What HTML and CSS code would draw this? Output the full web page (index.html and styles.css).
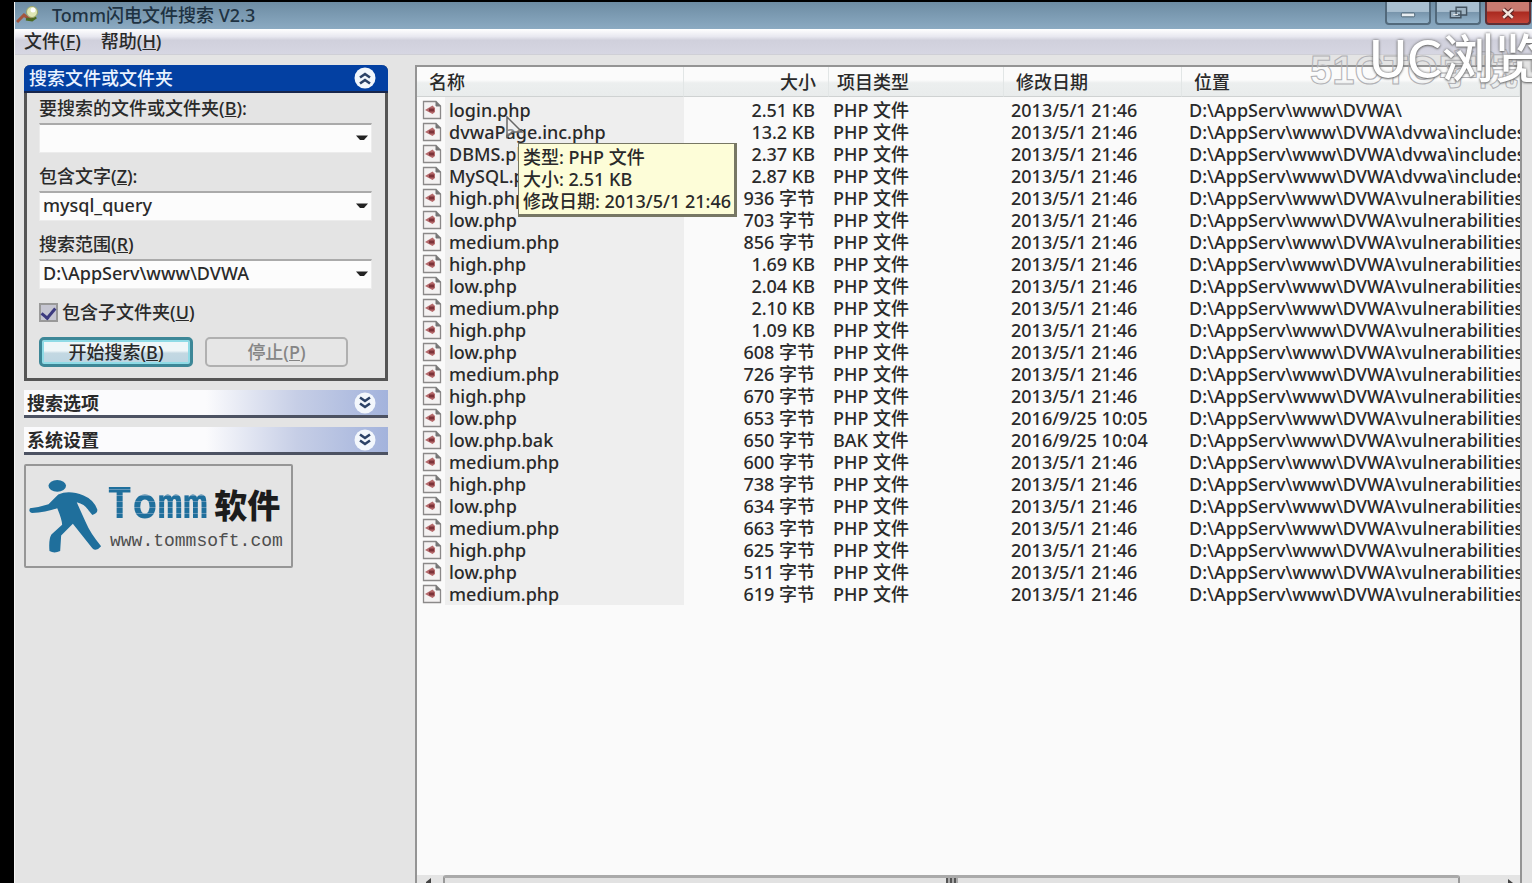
FILE: index.html
```html
<!DOCTYPE html>
<html lang="zh-CN">
<head>
<meta charset="utf-8">
<title>Tomm闪电文件搜索 V2.3</title>
<link rel="stylesheet" href="styles.css">
</head>
<body>
<svg class="defs" aria-hidden="true">
  <symbol id="file" viewBox="0 0 20 20">
    <path d="M1.5 1.5H14L18.500 6V18.500H1.500Z" fill="#f4f2f2" stroke="#8b8989" stroke-width="1.300"/>
    <path d="M14 1.500V6H18.500" fill="#777" stroke="#777"/>
    <path d="M3 10L10.500 5.500L13 8V12L10.500 14Z" fill="#b4686a"/>
    <path d="M7 8.500h5v3h-5z" fill="#7d3238"/>
  </symbol>
  <symbol id="down" viewBox="0 0 12 6"><path d="M0 0.500H12L8 5H4Z" fill="#222"/></symbol>
  <symbol id="chev" viewBox="0 0 22 22">
    <circle cx="11" cy="11" r="10.500" fill="#f3f7fc"/>
    <path d="M6 5.500L11 9L16 5.500M6 11.500L11 15L16 11.500" fill="none" stroke="#2c4266" stroke-width="2.600"/>
  </symbol>
</svg>
<div class="window">
  <header class="titlebar">
    <svg class="app-icon" viewBox="0 0 24 20" aria-hidden="true">
      <path d="M1 17L8 10L13 14L17 11" fill="none" stroke="#a4553c" stroke-width="3"/>
      <path d="M10 14L16 15L20 12" fill="none" stroke="#4c6a22" stroke-width="3"/>
      <circle cx="16" cy="7" r="5.500" fill="#dfe6b4" stroke="#9ba66a"/>
      <circle cx="17" cy="5" r="2.500" fill="#fff"/>
    </svg>
    <h1 class="title">Tomm闪电文件搜索 V2.3</h1>
    <div class="controls">
      <button class="ctl" type="button" aria-label="最小化"><svg viewBox="0 0 44 20"><rect x="15" y="10" width="14" height="4" rx="1" fill="#e8eef2" stroke="#4d6473"/></svg></button>
      <button class="ctl" type="button" aria-label="还原"><svg viewBox="0 0 44 20"><path d="M20 4h11v8h-11zM14 8h11v7h-11z" fill="#9fb4c3" stroke="#43525f" stroke-width="1.500"/><path d="M17 11h5v1h-5z" fill="#eee"/></svg></button>
      <button class="ctl close" type="button" aria-label="关闭"><svg viewBox="0 0 44 20"><path d="M17 6L27 15M27 6L17 15" stroke="#5d2525" stroke-width="5"/><path d="M17 6L27 15M27 6L17 15" stroke="#f3e4dc" stroke-width="2.600"/></svg></button>
    </div>
  </header>
  <nav class="menubar">
    <button type="button">文件(<u>F</u>)</button>
    <button type="button">帮助(<u>H</u>)</button>
  </nav>
  <main class="content">
    <aside class="sidebar">
      <section class="panel">
        <h2 class="panel-head"><span>搜索文件或文件夹</span>
          <button type="button" aria-label="折叠"><svg class="chev up"><use href="#chev"/></svg></button></h2>
        <form class="panel-body">
          <div class="field">
            <label for="name">要搜索的文件或文件夹(<u>B</u>):</label>
            <div class="combo"><select id="name"><option></option></select><svg><use href="#down"/></svg></div>
          </div>
          <div class="field">
            <label for="text">包含文字(<u>Z</u>):</label>
            <div class="combo"><select id="text"><option>mysql_query</option></select><svg><use href="#down"/></svg></div>
          </div>
          <div class="field">
            <label for="scope">搜索范围(<u>R</u>)</label>
            <div class="combo"><select id="scope"><option>D:\AppServ\www\DVWA</option></select><svg><use href="#down"/></svg></div>
          </div>
          <div class="check">
            <input id="sub" type="checkbox" checked>
            <label for="sub">包含子文件夹(<u>U</u>)</label>
          </div>
          <div class="actions">
            <button class="start" type="button">开始搜索(<u>B</u>)</button>
            <button class="stop" type="button" disabled>停止(<u>P</u>)</button>
          </div>
        </form>
      </section>
      <button class="section" type="button"><span>搜索选项</span><svg class="chev"><use href="#chev"/></svg></button>
      <button class="section" type="button"><span>系统设置</span><svg class="chev"><use href="#chev"/></svg></button>
      <div class="brand">
        <svg class="runner" viewBox="0 0 80 78" aria-hidden="true">
          <ellipse cx="30" cy="8" rx="9" ry="6" fill="#1f6f9c"/>
          <path d="M2 31Q0 35 4 36Q18 35 30 31Q35 43 35 48L24 58Q21 63 22 75Q27 78 33 75L34 59L46 47L66 72Q70 76 75 70Q64 57 59 45L50 25Q58 27 62 33L66 38Q72 36 71 32Q67 22 57 18Q42 12 31 17L21 27Q12 30 2 31Z" fill="#1f6f9c"/>
        </svg>
        <div class="brand-text">
          <div class="brand-name"><span class="latin">Tomm</span><span class="han">软件</span></div>
          <div class="site">www.tommsoft.com</div>
        </div>
      </div>
    </aside>
    <section class="list">
      <div class="scroller">
      <table>
        <colgroup><col class="c-name"><col class="c-size"><col class="c-type"><col class="c-date"><col></colgroup>
        <thead><tr><th>名称</th><th class="num">大小</th><th>项目类型</th><th>修改日期</th><th>位置</th></tr></thead>
        <tbody>
<tr><td><svg><use href="#file"/></svg>login.php</td><td>2.51 KB</td><td>PHP 文件</td><td>2013/5/1 21:46</td><td>D:\AppServ\www\DVWA\</td></tr>
<tr><td><svg><use href="#file"/></svg>dvwaPage.inc.php</td><td>13.2 KB</td><td>PHP 文件</td><td>2013/5/1 21:46</td><td>D:\AppServ\www\DVWA\dvwa\includes</td></tr>
<tr><td><svg><use href="#file"/></svg>DBMS.php</td><td>2.37 KB</td><td>PHP 文件</td><td>2013/5/1 21:46</td><td>D:\AppServ\www\DVWA\dvwa\includes</td></tr>
<tr><td><svg><use href="#file"/></svg>MySQL.php</td><td>2.87 KB</td><td>PHP 文件</td><td>2013/5/1 21:46</td><td>D:\AppServ\www\DVWA\dvwa\includes</td></tr>
<tr><td><svg><use href="#file"/></svg>high.php</td><td>936 字节</td><td>PHP 文件</td><td>2013/5/1 21:46</td><td>D:\AppServ\www\DVWA\vulnerabilities</td></tr>
<tr><td><svg><use href="#file"/></svg>low.php</td><td>703 字节</td><td>PHP 文件</td><td>2013/5/1 21:46</td><td>D:\AppServ\www\DVWA\vulnerabilities</td></tr>
<tr><td><svg><use href="#file"/></svg>medium.php</td><td>856 字节</td><td>PHP 文件</td><td>2013/5/1 21:46</td><td>D:\AppServ\www\DVWA\vulnerabilities</td></tr>
<tr><td><svg><use href="#file"/></svg>high.php</td><td>1.69 KB</td><td>PHP 文件</td><td>2013/5/1 21:46</td><td>D:\AppServ\www\DVWA\vulnerabilities</td></tr>
<tr><td><svg><use href="#file"/></svg>low.php</td><td>2.04 KB</td><td>PHP 文件</td><td>2013/5/1 21:46</td><td>D:\AppServ\www\DVWA\vulnerabilities</td></tr>
<tr><td><svg><use href="#file"/></svg>medium.php</td><td>2.10 KB</td><td>PHP 文件</td><td>2013/5/1 21:46</td><td>D:\AppServ\www\DVWA\vulnerabilities</td></tr>
<tr><td><svg><use href="#file"/></svg>high.php</td><td>1.09 KB</td><td>PHP 文件</td><td>2013/5/1 21:46</td><td>D:\AppServ\www\DVWA\vulnerabilities</td></tr>
<tr><td><svg><use href="#file"/></svg>low.php</td><td>608 字节</td><td>PHP 文件</td><td>2013/5/1 21:46</td><td>D:\AppServ\www\DVWA\vulnerabilities</td></tr>
<tr><td><svg><use href="#file"/></svg>medium.php</td><td>726 字节</td><td>PHP 文件</td><td>2013/5/1 21:46</td><td>D:\AppServ\www\DVWA\vulnerabilities</td></tr>
<tr><td><svg><use href="#file"/></svg>high.php</td><td>670 字节</td><td>PHP 文件</td><td>2013/5/1 21:46</td><td>D:\AppServ\www\DVWA\vulnerabilities</td></tr>
<tr><td><svg><use href="#file"/></svg>low.php</td><td>653 字节</td><td>PHP 文件</td><td>2016/9/25 10:05</td><td>D:\AppServ\www\DVWA\vulnerabilities</td></tr>
<tr><td><svg><use href="#file"/></svg>low.php.bak</td><td>650 字节</td><td>BAK 文件</td><td>2016/9/25 10:04</td><td>D:\AppServ\www\DVWA\vulnerabilities</td></tr>
<tr><td><svg><use href="#file"/></svg>medium.php</td><td>600 字节</td><td>PHP 文件</td><td>2013/5/1 21:46</td><td>D:\AppServ\www\DVWA\vulnerabilities</td></tr>
<tr><td><svg><use href="#file"/></svg>high.php</td><td>738 字节</td><td>PHP 文件</td><td>2013/5/1 21:46</td><td>D:\AppServ\www\DVWA\vulnerabilities</td></tr>
<tr><td><svg><use href="#file"/></svg>low.php</td><td>634 字节</td><td>PHP 文件</td><td>2013/5/1 21:46</td><td>D:\AppServ\www\DVWA\vulnerabilities</td></tr>
<tr><td><svg><use href="#file"/></svg>medium.php</td><td>663 字节</td><td>PHP 文件</td><td>2013/5/1 21:46</td><td>D:\AppServ\www\DVWA\vulnerabilities</td></tr>
<tr><td><svg><use href="#file"/></svg>high.php</td><td>625 字节</td><td>PHP 文件</td><td>2013/5/1 21:46</td><td>D:\AppServ\www\DVWA\vulnerabilities</td></tr>
<tr><td><svg><use href="#file"/></svg>low.php</td><td>511 字节</td><td>PHP 文件</td><td>2013/5/1 21:46</td><td>D:\AppServ\www\DVWA\vulnerabilities</td></tr>
<tr><td><svg><use href="#file"/></svg>medium.php</td><td>619 字节</td><td>PHP 文件</td><td>2013/5/1 21:46</td><td>D:\AppServ\www\DVWA\vulnerabilities</td></tr>
        </tbody>
      </table>
      </div>
      <div class="hscroll" aria-hidden="true">
        <svg viewBox="0 0 26 8"><path d="M9 7L14 3V8H9Z" fill="#444"/></svg>
        <div class="thumb"><span class="grip"></span></div>
        <svg class="wide" viewBox="0 0 60 8"><path d="M48 8V4L53 8Z" fill="#444"/></svg>
      </div>
      <svg class="cursor" viewBox="0 0 22 26" aria-hidden="true"><path d="M2 1V21L7 16L17 16Z" fill="#f4f4f4" fill-opacity=".5" stroke="#686868" stroke-width="1.500"/></svg>
      <div class="tooltip" role="tooltip">类型: PHP 文件<br>大小: 2.51 KB<br>修改日期: 2013/5/1 21:46</div>
    </section>
  </main>
</div>
<div class="mark outline">51CTO学院</div>
<div class="mark uc">UC浏览器</div>
</body>
</html>
```
FILE: styles.css
```css
* { box-sizing: border-box; }
body {
  margin: 0;
  height: 100vh;
  overflow: hidden;
  position: relative;
  background: #000;
  padding: 2px 0 0 14px;
  color: #2a2a2a;
  font: 500 18px/22px "Noto Sans", "Noto Sans CJK SC", sans-serif;
}
button, select, input { font: inherit; color: inherit; margin: 0; }
button { border: 0; background: none; padding: 0; text-align: left; }
.defs { position: absolute; width: 0; height: 0; }
.window { height: 100%; display: flex; flex-direction: column; background: #e4e4e4; border-left: 1px solid #f6f6f6; overflow: hidden; }

.titlebar { display: flex; align-items: center; height: 27px; flex: none; padding: 0 1px 2px; background: linear-gradient(#6d8ca3, #8baac2); }
.app-icon { width: 24px; height: 20px; }
.title { margin: 0 0 0 12px; font-size: 18px; font-weight: 500; color: #1e3242; flex: 1; }
.controls { display: flex; gap: 4px; align-self: flex-start; }
.ctl { width: 46px; height: 23px; border: 2px solid #52697b; border-top: 0; border-radius: 0 0 4px 4px; background: linear-gradient(#a9bfd0 45%, #7895ac 50%, #94b3ca); }
.ctl svg { display: block; width: 100%; height: 20px; }
.close { background: linear-gradient(#c87a70 40%, #ab2a20 50%, #c4453a); border-color: #5e3036; }

.menubar { display: flex; gap: 20px; flex: none; height: 26px; padding: 0 9px 2px; background: linear-gradient(#fff, #e8e8f0 30%, #d0d0dc 45%, #d6d6e2); border-bottom: 1px solid #cfcfd6; }

.content { flex: 1; min-height: 0; display: flex; gap: 27px; padding: 10px 10px 0 9px; }
.sidebar { width: 364px; flex: none; display: flex; flex-direction: column; gap: 9px; }
.panel { border: 3px solid #555; border-top: 0; border-radius: 6px 6px 0 0; background: #e4e4e4; }
.panel-head { display: flex; align-items: center; justify-content: space-between; height: 28px; margin: 0 -3px; padding: 0 12px 0 5px; border-radius: 6px 6px 0 0; background: #0340a2; border-bottom: 2px solid #17264c; color: #eaf2ff; font-size: 18px; font-weight: 500; }
.chev { display: block; width: 22px; height: 22px; }
.up { transform: rotate(180deg); }
.panel-body { margin: 0; padding: 0 13px 11px 12px; }
.field { margin-bottom: 8px; }
.field label { display: block; line-height: 30px; }
.combo { display: grid; align-items: center; }
.combo select { grid-area: 1 / 1; width: 100%; height: 30px; appearance: none; border: 1px solid #ececec; border-top: 2px solid #aaa; border-radius: 0; background: #fcfcfc; padding: 0 3px 3px; }
.combo svg { grid-area: 1 / 1; justify-self: end; width: 12px; height: 6px; margin-right: 4px; pointer-events: none; }
.check { display: flex; align-items: center; gap: 4px; margin-top: 12px; }
.check input { appearance: none; width: 19px; height: 19px; border: 2px solid #999; background: #c6c6d2; display: grid; place-items: center; }
.check input:checked::before { content: ""; width: 6px; height: 11px; border: solid #3c3a80; border-width: 0 3px 3px 0; transform: rotate(40deg); }
.actions { display: flex; gap: 12px; margin-top: 14px; }
.actions button { height: 30px; border-radius: 5px; text-align: center; }
.start { width: 154px; border: 3px solid #3d8797; background: linear-gradient(#eef6f8 45%, #c3d8e2 55%, #bcd5e2); box-shadow: inset 0 0 0 2px #8fdbe6; }
.stop { width: 143px; border: 2px solid #b0b0b0; background: #e6e6e6; color: #858585; }
.section { display: flex; align-items: center; justify-content: space-between; height: 28px; padding: 0 12px 0 3px; border-bottom: 3px solid #4c5262; background: linear-gradient(90deg, #fbfbfd 50%, #c6cee6 75%, #a3b3dc); font-weight: 700; }

.brand { display: flex; align-items: center; width: 269px; height: 104px; padding-left: 2px; border: 2px solid #969696; border-radius: 2px; gap: 4px; }
.runner { width: 78px; height: 76px; flex: none; }
.brand-text { flex: 1; padding-top: 10px; }
.brand-name { display: flex; align-items: center; gap: 6px; height: 40px; }
.latin { font: 700 42px/40px "DejaVu Sans Mono", monospace; color: transparent; background: repeating-linear-gradient(#1f6f9c 0 5px, #6496b8 5px 6px); background-clip: text; margin-left: -3px; }
.han { font: 900 33px/40px "Noto Sans CJK SC", sans-serif; color: #1c1c1c; }
.site { font: 18px/34px "Liberation Mono", monospace; color: #4e4e4e; }

.list { position: relative; flex: 1; min-width: 0; display: flex; flex-direction: column; background: #fafafa; border: 2px solid #949494; border-bottom: 0; }
.scroller { flex: 1; min-height: 0; overflow: hidden; }
table { width: 100%; table-layout: fixed; border-collapse: separate; border-spacing: 0; }
.c-name { width: 267px; }
.c-size { width: 145px; }
.c-type { width: 175px; }
.c-date { width: 178px; }
th { height: 30px; padding: 0 12px; font-weight: 500; text-align: left; background: linear-gradient(#fbfbfb 45%, #ecefef 55%, #e9ecec); border-bottom: 1px solid #cfd2d2; border-right: 1px solid #e2e6e6; }
th:nth-child(3) { padding-left: 8px; }
th.num { text-align: right; }
td { height: 22px; padding: 0 4px; white-space: nowrap; overflow: hidden; }
tbody tr:first-child td { height: 24px; padding-top: 2px; }
td:first-child { background: linear-gradient(90deg, #fafafa 28px, #eee 28px); }
td:first-child svg { width: 20px; height: 20px; margin: 1px 7px 1px 1px; vertical-align: top; }
td:nth-child(2) { text-align: right; padding-right: 14px; }
td:nth-child(4), td:nth-child(5) { padding: 0 0 0 7px; }
.hscroll { display: flex; height: 8px; flex: none; background: #e4e4e4; }
.hscroll svg { width: 26px; height: 8px; flex: none; }
.hscroll svg.wide { width: 60px; }
.thumb { flex: 1; border: 2px solid #999; border-top: 3px solid #aaa; border-bottom: 0; border-radius: 3px 3px 0 0; background: #e2e2e2; display: flex; justify-content: center; }
.grip { width: 12px; height: 5px; background: repeating-linear-gradient(90deg, #555 0 2px, #aaa 2px 4px); }
.cursor { position: absolute; left: 88px; top: 49px; width: 22px; height: 26px; }
.tooltip { position: absolute; left: 101px; top: 76px; padding: 2px 3px 2px 4px; background: #fdfdd8; border: 2px solid #777764; border-width: 1px 3px 3px 1px; white-space: nowrap; }

.mark { position: absolute; right: 0; overflow: hidden; white-space: nowrap; }
.outline { top: 40px; width: 222px; font: 700 40px/60px "Liberation Sans", "Noto Sans CJK SC", sans-serif; color: transparent; -webkit-text-stroke: 1px #b0b0b4; }
.uc { top: 28px; width: 163px; font: 500 52px/60px Lato, "Noto Sans CJK SC", sans-serif; color: #fff; text-shadow: 0 0 3px #666, 0 1px 2px #777; }
```
